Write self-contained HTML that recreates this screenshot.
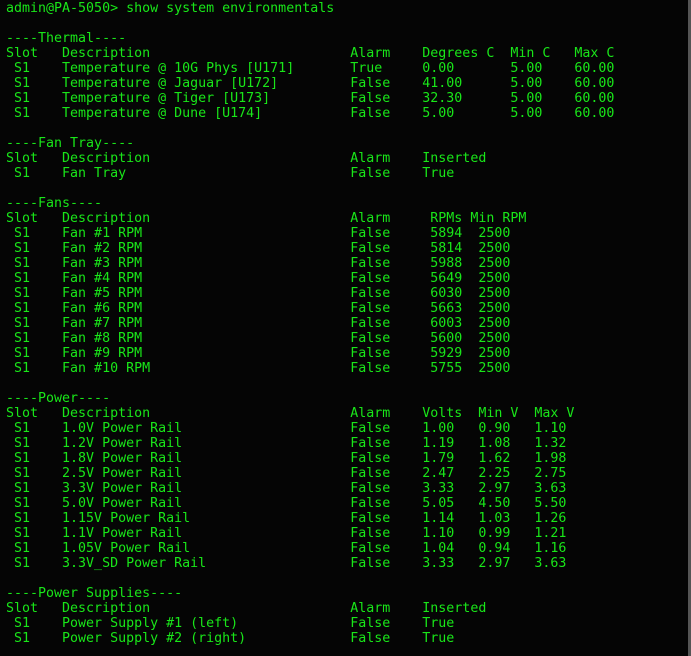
<!DOCTYPE html>
<html><head><meta charset="utf-8"><style>
html,body{margin:0;padding:0;background:#050505;width:691px;height:656px;overflow:hidden}
pre{margin:0;position:absolute;left:6px;top:1px;font-family:"DejaVu Sans Mono","Liberation Mono",monospace;font-size:13.3px;line-height:15px;color:#19e619}
.sb{position:absolute;left:688px;top:0;width:3px;height:656px;background:#555}
</style></head><body>
<pre id="t"></pre>
<div class="sb"></div>
<script>
function r(cols){var s="";for(var i=0;i<cols.length;i+=2){s=s.padEnd(cols[i]," ")+cols[i+1];}return s;}
var L=[];
L.push("admin@PA-5050> show system environmentals","","----Thermal----");
L.push(r([0,"Slot",7,"Description",43,"Alarm",52,"Degrees C",63,"Min C",71,"Max C"]));
[["Temperature @ 10G Phys [U171]","True","0.00"],["Temperature @ Jaguar [U172]","False","41.00"],["Temperature @ Tiger [U173]","False","32.30"],["Temperature @ Dune [U174]","False","5.00"]].forEach(function(a){L.push(r([1,"S1",7,a[0],43,a[1],52,a[2],63,"5.00",71,"60.00"]));});
L.push("","----Fan Tray----");
L.push(r([0,"Slot",7,"Description",43,"Alarm",52,"Inserted"]));
L.push(r([1,"S1",7,"Fan Tray",43,"False",52,"True"]));
L.push("","----Fans----");
L.push(r([0,"Slot",7,"Description",43,"Alarm",53,"RPMs",58,"Min RPM"]));
["5894","5814","5988","5649","6030","5663","6003","5600","5929","5755"].forEach(function(v,i){L.push(r([1,"S1",7,"Fan #"+(i+1)+" RPM",43,"False",53,v,59,"2500"]));});
L.push("","----Power----");
L.push(r([0,"Slot",7,"Description",43,"Alarm",52,"Volts",59,"Min V",66,"Max V"]));
[["1.0V Power Rail","1.00","0.90","1.10"],["1.2V Power Rail","1.19","1.08","1.32"],["1.8V Power Rail","1.79","1.62","1.98"],["2.5V Power Rail","2.47","2.25","2.75"],["3.3V Power Rail","3.33","2.97","3.63"],["5.0V Power Rail","5.05","4.50","5.50"],["1.15V Power Rail","1.14","1.03","1.26"],["1.1V Power Rail","1.10","0.99","1.21"],["1.05V Power Rail","1.04","0.94","1.16"],["3.3V_SD Power Rail","3.33","2.97","3.63"]].forEach(function(a){L.push(r([1,"S1",7,a[0],43,"False",52,a[1],59,a[2],66,a[3]]));});
L.push("","----Power Supplies----");
L.push(r([0,"Slot",7,"Description",43,"Alarm",52,"Inserted"]));
L.push(r([1,"S1",7,"Power Supply #1 (left)",43,"False",52,"True"]));
L.push(r([1,"S1",7,"Power Supply #2 (right)",43,"False",52,"True"]));
document.getElementById("t").textContent=L.join("\n");
</script>
</body></html>
